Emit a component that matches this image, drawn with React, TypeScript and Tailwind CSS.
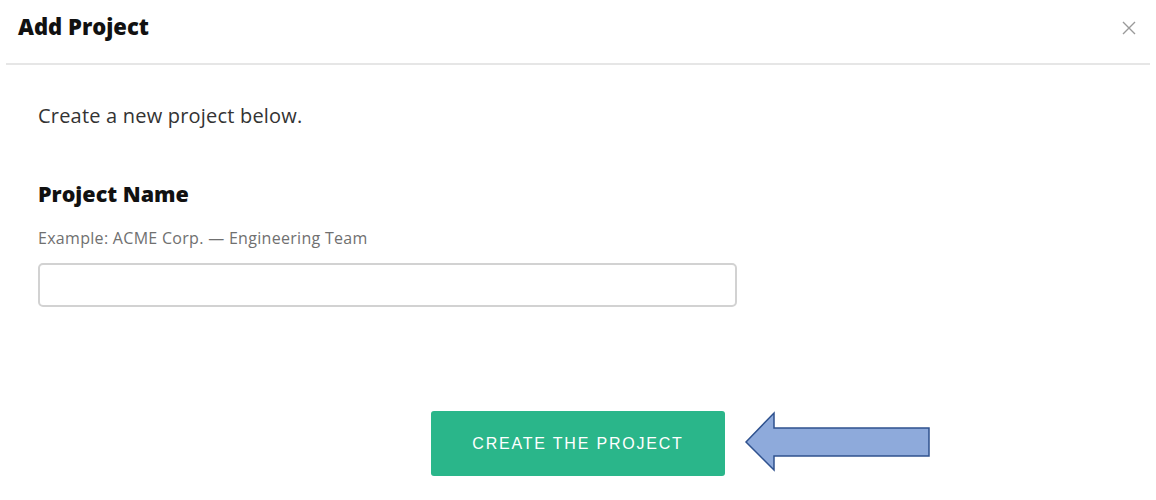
export default function App() {
	return (
		<div className="relative h-[500px] w-[1156px] overflow-hidden bg-white font-['Open_Sans',sans-serif] text-[#222]">
			<header className="mx-[6px] flex h-[65px] items-center justify-between border-b-2 border-[#e6e6e6] pb-[10px] pl-[12px] pr-[14px]">
				<h1 className="text-[22px] font-extrabold text-[#111]">Add Project</h1>
				<svg width="14" height="14" viewBox="0 0 14 14" className="mt-[2px]">
					<path d="M1 1 L13 13 M13 1 L1 13" stroke="#9a9a9a" strokeWidth="1.4" />
				</svg>
			</header>

			<main className="px-[38px] pt-[38px]">
				<p className="text-[20px] leading-[26px] tracking-[0.2px] text-[#333]">Create a new project below.</p>

				<label className="mt-[51px] block text-[21.5px] font-extrabold leading-[28px] text-[#111]">
					Project Name
				</label>
				<p className="mt-[20px] text-[16px] leading-[20px] tracking-[0.3px] text-[#707070]">
					Example: ACME Corp. — Engineering Team
				</p>
				<input
					type="text"
					className="mt-[15px] block h-[44px] w-[699px] rounded-[5px] border-2 border-[#d2d2d2] px-3 text-[16px] outline-none"
				/>

				<div className="mt-[104px] flex justify-center">
					<button className="h-[65px] w-[294px] rounded-[3px] bg-[#2ab68a] font-['Liberation_Sans',Arial,sans-serif] text-[16px] tracking-[1.8px] text-white">
						CREATE THE PROJECT
					</button>
				</div>
			</main>

			<svg
				className="absolute left-[743px] top-[410px]"
				width="190"
				height="64"
				viewBox="0 0 190 64"
			>
				<polygon
					points="3,32 31,3 31,18 186,18 186,46 31,46 31,60"
					fill="#8eaadb"
					stroke="#2f528f"
					strokeWidth="1.5"
				/>
			</svg>
		</div>
	);
}
